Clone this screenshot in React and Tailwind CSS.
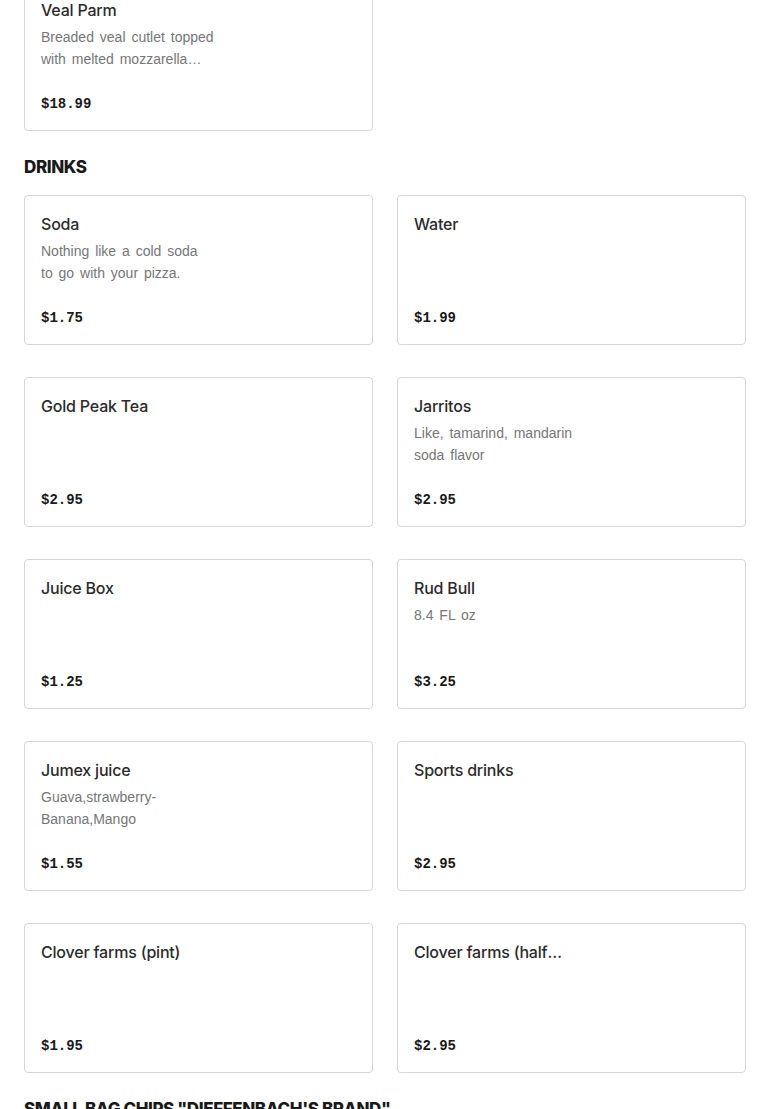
import React from 'react';

const veal = [
  { name: 'Veal Parm', desc: 'Breaded veal cutlet topped with melted mozzarella cheese and marinara', price: '$18.99' },
];

const drinks = [
  { name: 'Soda', desc: 'Nothing like a cold soda to go with your pizza.', price: '$1.75' },
  { name: 'Water', desc: '', price: '$1.99' },
  { name: 'Gold Peak Tea', desc: '', price: '$2.95' },
  { name: 'Jarritos', desc: 'Like, tamarind, mandarin soda flavor', price: '$2.95' },
  { name: 'Juice Box', desc: '', price: '$1.25' },
  { name: 'Rud Bull', desc: '8.4 FL oz', price: '$3.25' },
  { name: 'Jumex juice', desc: 'Guava,strawberry-Banana,Mango', price: '$1.55' },
  { name: 'Sports drinks', desc: '', price: '$2.95' },
  { name: 'Clover farms (pint)', desc: '', price: '$1.95' },
  { name: 'Clover farms (half gallon)', desc: '', price: '$2.95' },
];

const ItemCard = ({ item }) => (
  <div className="flex h-[150px] flex-col rounded-[4px] border border-[#d6d6d6] bg-white px-4 pt-[15px] pb-[14px]">
    <h3 className="line-clamp-1 max-w-[172px] text-[16px] font-medium leading-[26px] tracking-[-0.2px] text-[#2b2b2b]">{item.name}</h3>
    {item.desc && (
      <p className="mt-[3px] line-clamp-2 max-w-[174px] font-['Liberation_Sans',sans-serif] text-[14px] leading-[22px] [word-spacing:2px] text-[#767676]">{item.desc}</p>
    )}
    <p className="mt-auto font-['Liberation_Mono',monospace] text-[14px] font-bold leading-[24px] text-[#191919]">{item.price}</p>
  </div>
);

const Section = ({ title, items }) => (
  <section className="mt-6">
    <h2 className="mb-4 text-[17px] font-extrabold uppercase leading-6 tracking-[-0.4px] text-[#191919]">{title}</h2>
    <div className="grid grid-cols-2 gap-x-6 gap-y-8">
      {items.map((item, i) => (
        <ItemCard key={i} item={item} />
      ))}
    </div>
  </section>
);

export default function App() {
  return (
    <div className="h-[1109px] overflow-hidden bg-white px-6 font-['Inter',sans-serif]">
      <div className="-mt-[19px] grid grid-cols-2 gap-x-6">
        {veal.map((item, i) => (
          <ItemCard key={i} item={item} />
        ))}
      </div>
      <Section title="Drinks" items={drinks} />
      <Section title={'Small Bag Chips "Dieffenbach\'s Brand"'} items={[]} />
    </div>
  );
}
